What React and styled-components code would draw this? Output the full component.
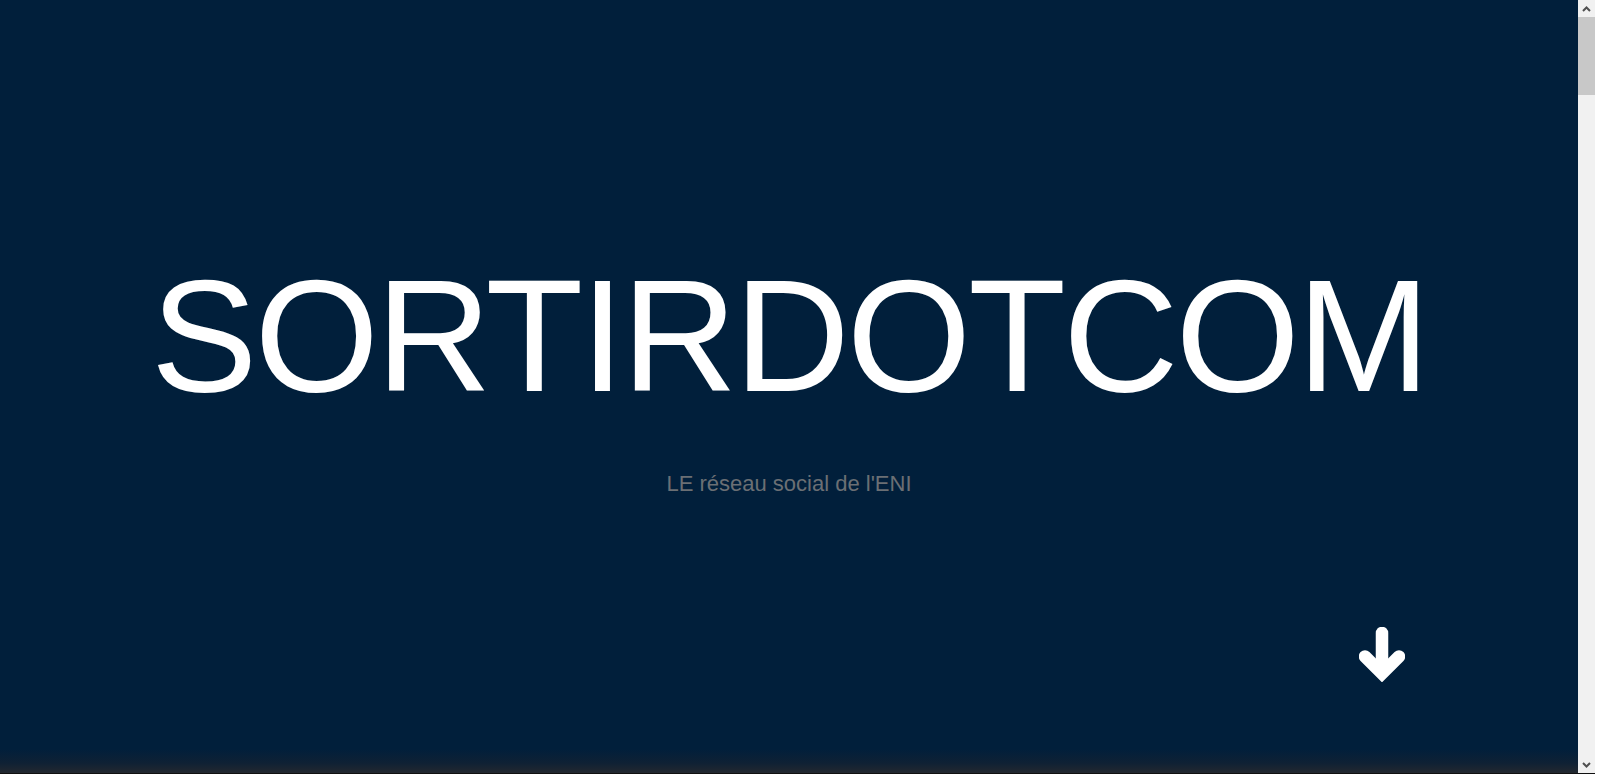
import React from 'react';
import styled, { createGlobalStyle } from 'styled-components';

const GlobalStyle = createGlobalStyle`
    html, body {
        margin: 0;
        padding: 0;
        height: 100%;
        overflow: hidden;
        background: #ffffff;
    }
    body {
        font-family: "Liberation Sans", Arial, sans-serif;
    }
`;

const Chevron = ({ up }) => (
    <svg width="9" height="6" viewBox="0 0 9 6">
        <path
            d={up ? "M1 5 L4.5 1.5 L8 5" : "M1 1 L4.5 4.5 L8 1"}
            fill="none"
            stroke="#505050"
            strokeWidth="2"
        />
    </svg>
);

const App = () => {
    return (
        <Page>
            <GlobalStyle />
            <Main>
                <Hero>
                    <Title>SORTIRDOTCOM</Title>
                    <Subtitle>LE réseau social de l'ENI</Subtitle>
                    <ScrollDown href="#about" aria-label="Descendre">
                        <svg width="46" height="55" viewBox="0 0 46 55">
                            <g fill="none" stroke="#ffffff" strokeWidth="12.5">
                                <line x1="23" y1="6" x2="23" y2="44" strokeLinecap="round" />
                                <polyline
                                    points="6,29.5 23,46.5 40,29.5"
                                    strokeLinecap="round"
                                    strokeLinejoin="miter"
                                />
                            </g>
                        </svg>
                    </ScrollDown>
                </Hero>
                <Section id="about" />
            </Main>
            <Rail>
                <RailButton><Chevron up /></RailButton>
                <Track>
                    <Thumb />
                </Track>
                <RailButton><Chevron /></RailButton>
            </Rail>
        </Page>
    );
};

//Styled Components
const Page = styled.div`
    display: flex;
    width: calc(100vw - 5px);
    height: calc(100vh - 1px);
    border-bottom: 1px solid #101010;
`;

const Main = styled.main`
    flex: 1;
    min-width: 0;
    overflow-y: auto;
    scrollbar-width: none;
    &::-webkit-scrollbar {
        display: none;
    }
`;

const Rail = styled.div`
    width: 17px;
    flex: none;
    display: flex;
    flex-direction: column;
    background: #f1f1f1;
`;

const RailButton = styled.div`
    height: 17px;
    display: flex;
    align-items: center;
    justify-content: center;
`;

const Track = styled.div`
    flex: 1;
`;

const Thumb = styled.div`
    height: 78px;
    background: #c8c8c8;
`;

const Hero = styled.header`
    height: 773px;
    box-sizing: border-box;
    padding-top: 256px;
    display: flex;
    flex-direction: column;
    align-items: center;
    background: linear-gradient(
        to bottom,
        #011f3b 0,
        #011f3b calc(100% - 24px),
        #0f2134 calc(100% - 10px),
        #23282f 100%
    );
`;

const Title = styled.h1`
    margin: 0;
    font-family: "Liberation Sans", Arial, sans-serif;
    font-weight: normal;
    font-size: 160px;
    line-height: 160px;
    letter-spacing: -3px;
    color: #ffffff;
`;

const Subtitle = styled.p`
    margin: 57px 0 0;
    font-size: 22px;
    line-height: 22px;
    color: #6b6f74;
`;

const ScrollDown = styled.a`
    align-self: flex-end;
    margin: 132px 173px 0 0;
    display: block;
    width: 46px;
    height: 55px;
    line-height: 0;
`;

const Section = styled.section`
    height: 6569px;
    background: #23282f;
`;

export default App;
